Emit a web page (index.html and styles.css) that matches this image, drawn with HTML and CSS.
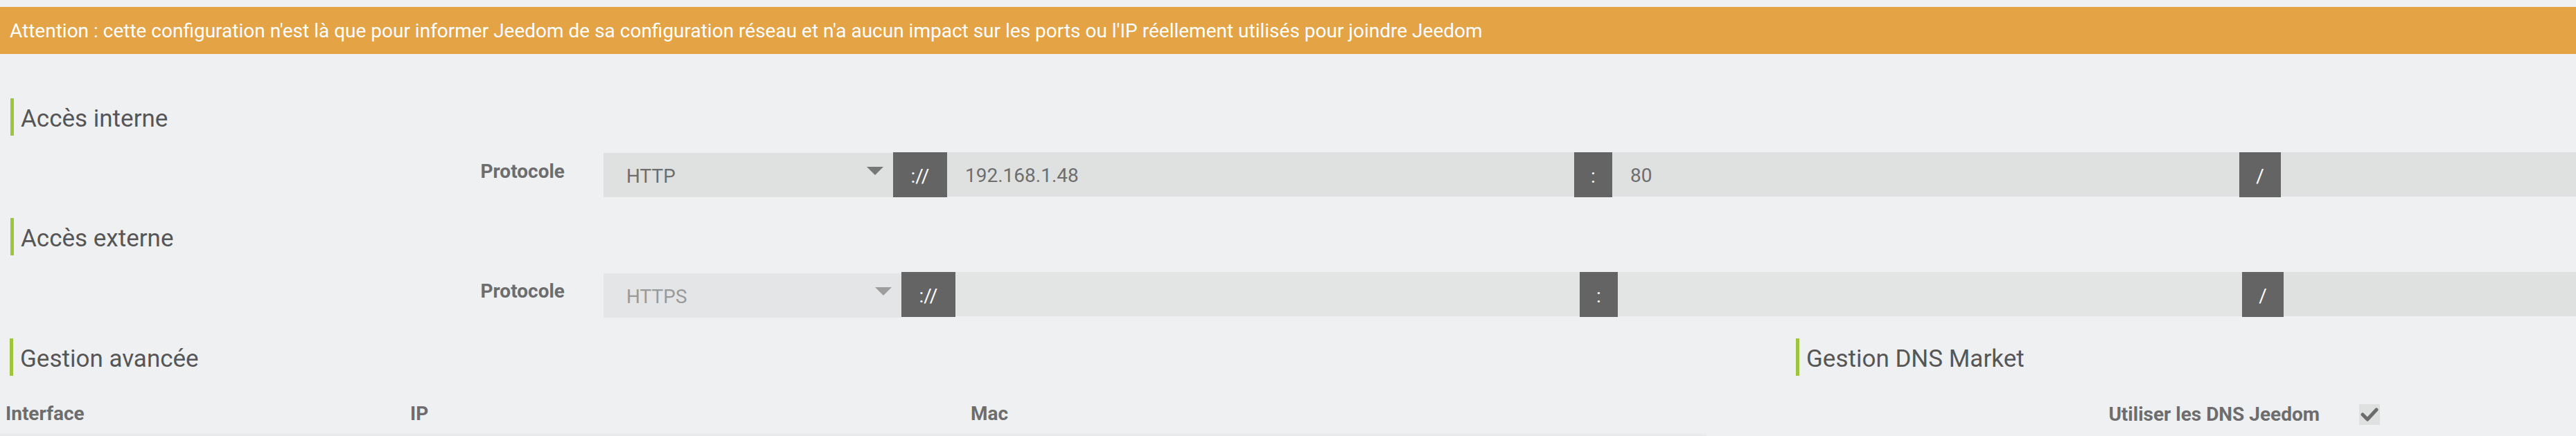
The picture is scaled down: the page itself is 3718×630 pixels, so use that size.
FILE: index.html
```html
<!DOCTYPE html>
<html lang="fr">

<head>
  <meta charset="UTF-8">
  <meta name="viewport" content="width=device-width, initial-scale=1.0">
  <title>Configuration réseau</title>
  <link rel="stylesheet" href="styles.css">
</head>

<body>
  <div class="alert">Attention : cette configuration n'est là que pour informer Jeedom de sa configuration réseau et n'a aucun impact sur les ports ou l'IP réellement utilisés pour joindre Jeedom</div>

  <div class="sectionTitle firstTitle">Accès interne</div>
  <div class="formRow">
    <label class="formLabel">Protocole</label>
    <div class="inputGroup">
      <div class="select">
        <span>HTTP</span>
        <svg class="caret" width="24" height="12" viewBox="0 0 24 12"><polygon points="0,0 24,0 12,12" /></svg>
      </div>
      <span class="addon addonScheme">://</span>
      <div class="input">192.168.1.48</div>
      <span class="addon addonPort">:</span>
      <div class="input">80</div>
      <span class="addon addonPath">/</span>
      <div class="input inputLast"></div>
    </div>
  </div>

  <div class="sectionTitle">Accès externe</div>
  <div class="formRow">
    <label class="formLabel">Protocole</label>
    <div class="inputGroup external">
      <div class="select">
        <span>HTTPS</span>
        <svg class="caret" width="24" height="12" viewBox="0 0 24 12"><polygon points="0,0 24,0 12,12" /></svg>
      </div>
      <span class="addon addonScheme">://</span>
      <div class="input"></div>
      <span class="addon addonPort">:</span>
      <div class="input"></div>
      <span class="addon addonPath">/</span>
      <div class="input inputLast"></div>
    </div>
  </div>

  <div class="bottomGrid">
    <div class="advanced">
      <div class="sectionTitle">Gestion avancée</div>
      <table class="ifaceTable">
        <colgroup>
          <col class="colIface">
          <col class="colIp">
          <col>
        </colgroup>
        <thead>
          <tr>
            <th>Interface</th>
            <th>IP</th>
            <th>Mac</th>
          </tr>
        </thead>
        <tbody>
          <tr>
            <td></td>
            <td></td>
            <td></td>
          </tr>
        </tbody>
      </table>
    </div>

    <div class="dnsMarket">
      <div class="sectionTitle">Gestion DNS Market</div>
      <div class="checkRow">
        <label class="checkLabel">Utiliser les DNS Jeedom</label>
        <span class="checkbox">
          <svg width="26" height="22" viewBox="0 0 26 22"><polyline points="3,11 10,18 23,4" /></svg>
        </span>
      </div>
    </div>
  </div>
</body>

</html>
```

FILE: styles.css
```css
body {
  font-family: Roboto, "Liberation Sans", sans-serif;
  font-size: 28px;
  background-color: #eff0f2;
  color: #555;
  margin: 0;
  padding-top: 10px;
  overflow: hidden;
}

.alert {
  height: 68px;
  display: flex;
  align-items: center;
  padding-left: 14px;
  background-color: #e4a345;
  color: #fff;
  white-space: nowrap;
}

.sectionTitle {
  height: 54px;
  margin: 30px 0 0 15px;
  padding-left: 10px;
  border-left: 5px solid #9dc63d;
  display: flex;
  align-items: center;
  padding-top: 4px;
  box-sizing: border-box;
  font-size: 35px;
  color: #565656;
  white-space: nowrap;
}

.firstTitle {
  margin-top: 64px;
}

.formRow {
  display: flex;
  margin-top: 24px;
  gap: 56px;
}

.formLabel {
  width: 815px;
  flex: none;
  text-align: right;
  font-weight: bold;
  color: #6d6d6d;
  padding-top: 11px;
}

.inputGroup {
  flex: 1;
  display: flex;
  align-items: flex-start;
  white-space: nowrap;
}

.select,
.input {
  height: 64px;
  box-sizing: border-box;
  background-color: #dfe0e0;
  color: #6e6e6e;
  line-height: 60px;
  padding-top: 4px;
}

.select {
  width: 418px;
  flex: none;
  margin-top: 1px;
  display: flex;
  justify-content: space-between;
  padding-left: 33px;
  padding-right: 14px;
}

.caret {
  margin-top: 16px;
  fill: #777;
}

.input {
  width: 905px;
  flex: none;
  padding-left: 26px;
}

.inputLast {
  flex: 1;
  width: auto;
}

.addon {
  height: 65px;
  flex: none;
  background-color: #646464;
  color: #fff;
  text-align: center;
  line-height: 61px;
  padding-top: 4px;
  box-sizing: border-box;
}

.addonScheme {
  width: 78px;
}

.addonPort {
  width: 55px;
}

.addonPath {
  width: 60px;
}

/* Accès externe : champs désactivés */
.external .select {
  width: 430px;
  margin-top: 2px;
  background-color: #e4e5e6;
  color: #9a9a9a;
}

.external .caret {
  fill: #9d9d9d;
}

.external .input {
  width: 901px;
  background-color: #e3e4e4;
}

.external .inputLast {
  width: auto;
  background-color: #dfe0e0;
}

.bottomGrid {
  display: grid;
  grid-template-columns: 2577px 1fr;
}

.advanced .sectionTitle {
  margin-left: 14px;
}

.ifaceTable {
  width: 2463px;
  margin-top: 27px;
  border-collapse: collapse;
  table-layout: fixed;
}

.colIface {
  width: 584px;
}

.colIp {
  width: 809px;
}

.ifaceTable th {
  text-align: left;
  padding: 8px;
  line-height: 40px;
  color: #6d6d6d;
}

.ifaceTable td {
  height: 40px;
  background-color: #e9eaec;
  border-top: 1px solid #eceded;
}

.checkRow {
  display: flex;
  align-items: center;
  margin-top: 39px;
  gap: 57px;
}

.checkLabel {
  width: 771px;
  text-align: right;
  font-weight: bold;
  color: #6d6d6d;
  white-space: nowrap;
}

.checkbox {
  width: 30px;
  height: 30px;
  background-color: #dfe0e0;
  display: flex;
  align-items: center;
  justify-content: center;
}

.checkbox polyline {
  fill: none;
  stroke: #6c6c6c;
  stroke-width: 5;
  stroke-linecap: round;
  stroke-linejoin: round;
}
```
